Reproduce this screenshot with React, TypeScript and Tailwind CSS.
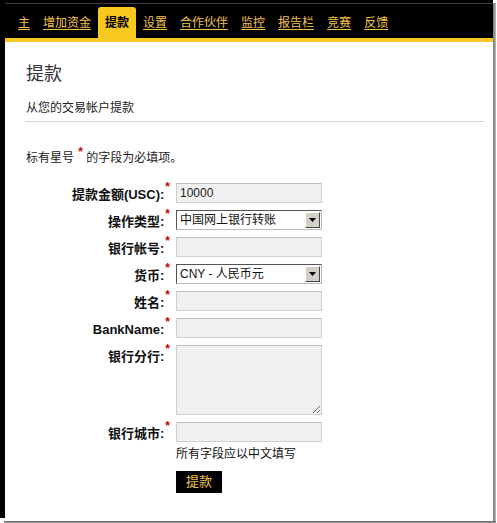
const tabs = ["主", "增加资金", "提款", "设置", "合作伙伴", "监控", "报告栏", "竞赛", "反馈"];

const font = "font-['Liberation_Sans','Noto_Sans_CJK_SC',sans-serif]";

function Star() {
  return <span className="relative -top-[6px] ml-[1px] text-[12px] font-bold leading-none text-[#cc0000]">*</span>;
}

function Label({ text }: { text: string }) {
  return (
    <div className="flex justify-end pt-[4px] pr-[6px] text-[13px] font-bold leading-[16px] text-[#111]">
      <span>{text}</span>
      <Star />
    </div>
  );
}

function TextInput({ value = "" }: { value?: string }) {
  return (
    <div className="flex h-[20px] w-[146px] items-center border border-[#d0d0d0] border-t-[#bdbdbd] bg-[#f0f0f0] px-[3px] text-[12px] text-[#222]">
      {value}
    </div>
  );
}

function FakeSelect({ value }: { value: string }) {
  return (
    <div className="flex h-[20px] w-[146px] items-center border border-[#555] border-b-[#bbb] border-r-[#bbb] bg-white pl-[3px] text-[12px] text-[#111]">
      <span className="flex-1">{value}</span>
      <div className="mr-[1px] flex h-[16px] w-[15px] items-center justify-center border border-[#fff] border-b-[#444] border-r-[#444] bg-[#d4d0c8]">
        <svg width="7" height="4" viewBox="0 0 7 4">
          <polygon points="0,0 7,0 3.5,4" fill="#000" />
        </svg>
      </div>
    </div>
  );
}

export default function App() {
  return (
    <div className={`h-[523px] w-[497px] bg-white ${font}`}>
      <div className="flex">
        <div className="flex h-[518px] w-[493px] flex-col border-l-[5px] border-black bg-white">
          <nav className="bg-black">
            <div className="h-[3px]" />
            <div className="h-px bg-[#3c3c3c]" />
            <div className="flex h-[34px] items-end gap-px pl-[7px] pt-[3px]">
              {tabs.map((t) =>
                t === "提款" ? (
                  <span
                    key={t}
                    className="flex h-[31px] items-center rounded-t-[3px] bg-[#f8c81e] px-[7px] text-[12px] font-bold text-black"
                  >
                    {t}
                  </span>
                ) : (
                  <a
                    key={t}
                    className="flex h-[31px] items-center px-[6px] text-[12px] text-[#f3c24e] underline underline-offset-2"
                  >
                    {t}
                  </a>
                )
              )}
            </div>
            <div className="h-[4px] bg-[#f6c823]" />
          </nav>

          <div className="flex flex-col pl-[21px] pr-[9px] pt-[20px] text-[#222]">
            <h1 className="text-[18px] leading-[24px] text-[#333]">提款</h1>
            <p className="mt-[14px] text-[12px] leading-[16px]">从您的交易帐户提款</p>
            <div className="-ml-px mt-[5px] h-px bg-[#d4d4d4]" />
            <p className="mt-[28px] text-[12px] leading-[16px]">
              标有星号 <Star /> 的字段为必填项。
            </p>

            <div className="mt-[17px] grid grid-cols-[150px_146px] gap-y-[7px]">
              <Label text="提款金额(USC):" />
              <TextInput value="10000" />
              <Label text="操作类型:" />
              <FakeSelect value="中国网上银行转账" />
              <Label text="银行帐号:" />
              <TextInput />
              <Label text="货币:" />
              <FakeSelect value="CNY - 人民币元" />
              <Label text="姓名:" />
              <TextInput />
              <Label text="BankName:" />
              <TextInput />
              <Label text="银行分行:" />
              <textarea className="h-[70px] w-[146px] resize border border-[#d0d0d0] border-t-[#bdbdbd] bg-[#f0f0f0] outline-none" />
              <Label text="银行城市:" />
              <div className="flex flex-col">
                <TextInput />
                <p className="mt-[5px] text-[12px] leading-[14px] text-[#111]">所有字段应以中文填写</p>
                <button className="mt-[10px] flex h-[22px] w-[46px] items-center justify-center bg-black text-[13px] text-[#f3c24e]">
                  提款
                </button>
              </div>
            </div>
          </div>
        </div>
        <div className="mt-[3px] h-[518px] w-[3px] bg-gradient-to-r from-[#777] to-[#bbb]" />
      </div>
      <div className="ml-[4px] h-[3px] w-[492px] bg-gradient-to-b from-[#666] to-[#bbb]" />
    </div>
  );
}
